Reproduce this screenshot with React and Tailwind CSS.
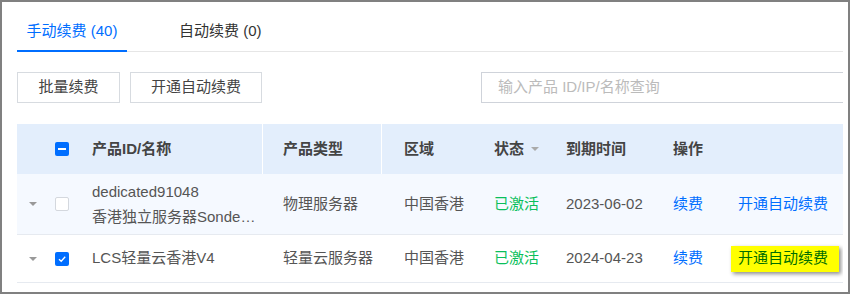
import React from 'react'

const cols = 'grid grid-cols-[30px_25px_191px_119px_92px_72px_107px_65px_125px]'

function Check({ state }) {
  if (state === 'some') {
    return (
      <span className="flex h-[14px] w-[14px] items-center justify-center rounded-[2px] bg-[#006eff]">
        <span className="h-[2px] w-[8px] bg-white" />
      </span>
    )
  }
  if (state === 'on') {
    return (
      <span className="flex h-[14px] w-[14px] items-center justify-center rounded-[2px] bg-[#006eff]">
        <svg width="10" height="10" viewBox="0 0 10 10" fill="none">
          <path d="M2 5.2 4.2 7.3 8.2 2.8" stroke="white" strokeWidth="1.3" />
        </svg>
      </span>
    )
  }
  return <span className="h-[14px] w-[14px] rounded-[2px] border border-[#d4d8de] bg-white" />
}

function Caret() {
  return <span className="h-0 w-0 border-x-4 border-t-4 border-x-transparent border-t-[#999]" />
}

export default function App() {
  return (
    <div className="h-[294px] w-[850px] overflow-hidden border-2 border-[#808080] bg-white font-['Liberation_Sans','Noto_Sans_CJK_SC',sans-serif] text-[15px] text-[#555]">
      <div className="ml-[15px] w-[826px] overflow-hidden">
        {/* tabs */}
        <div className="flex h-[50px] border-b border-[#e6e6e6]">
          <div className="-mb-px flex w-[110px] items-center justify-center border-b-2 border-[#006eff] pt-[10px] text-[#006eff]">手动续费 (40)</div>
          <div className="-mb-px ml-[52px] flex items-center border-b-2 border-transparent pt-[10px] text-[#333]">自动续费 (0)</div>
        </div>

        {/* toolbar */}
        <div className="mt-[20px] flex h-[31px]">
          <button className="w-[103px] shrink-0 border border-[#d7dbe0] bg-white text-[#444]">批量续费</button>
          <button className="ml-[10px] w-[132px] shrink-0 border border-[#d7dbe0] bg-white text-[#444]">开通自动续费</button>
          <div className="ml-[219px] flex w-[400px] shrink-0 items-center border border-[#cfd3da] pl-[16px] text-[#bbb]">输入产品 ID/IP/名称查询</div>
        </div>

        {/* table */}
        <div className="mt-[21px]">
          <div className={`${cols} h-[50px] items-center bg-[#e3eefc] font-bold text-[#444]`}>
            <div />
            <div className="flex pl-[8px]"><Check state="some" /></div>
            <div className="flex h-full items-center border-r border-white pl-[20px]">产品ID/名称</div>
            <div className="flex h-full items-center border-r border-white pl-[20px]">产品类型</div>
            <div className="pl-[22px]">区域</div>
            <div className="flex items-center pl-[20px]">
              状态
              <span className="ml-[7px] h-0 w-0 border-x-[4px] border-t-[4px] border-x-transparent border-t-[#aaa]" />
            </div>
            <div className="pl-[20px]">到期时间</div>
            <div className="pl-[20px]">操作</div>
            <div />
          </div>

          <div className={`${cols} h-[61px] items-center border-b border-[#e6eaf0] bg-[#f5f9ff]`}>
            <div className="flex pl-[12px]"><Caret /></div>
            <div className="flex pl-[8px]"><Check state="off" /></div>
            <div className="pl-[20px] leading-[25px]">
              <div>dedicated91048</div>
              <div className="w-[167px] truncate">香港独立服务器Sondesk-E3</div>
            </div>
            <div className="pl-[20px]">物理服务器</div>
            <div className="pl-[22px]">中国香港</div>
            <div className="pl-[20px] text-[#0abf5b]">已激活</div>
            <div className="pl-[20px]">2023-06-02</div>
            <div className="pl-[20px] text-[#006eff]">续费</div>
            <div className="pl-[20px] text-[#006eff]">开通自动续费</div>
          </div>

          <div className={`${cols} h-[48px] items-center border-b border-[#e6eaf0] bg-white`}>
            <div className="flex pl-[12px]"><Caret /></div>
            <div className="flex pl-[8px]"><Check state="on" /></div>
            <div className="pl-[20px]">LCS轻量云香港V4</div>
            <div className="pl-[20px]">轻量云服务器</div>
            <div className="pl-[22px]">中国香港</div>
            <div className="pl-[20px] text-[#0abf5b]">已激活</div>
            <div className="pl-[20px]">2024-04-23</div>
            <div className="pl-[20px] text-[#006eff]">续费</div>
            <div className="pl-[13px]">
              <span className="flex h-[26px] w-[108px] items-center bg-[#ffff00] pl-[7px] text-[#006e00] shadow-[2px_2px_4px_rgba(0,0,0,0.45)]">开通自动续费</span>
            </div>
          </div>
        </div>
      </div>
    </div>
  )
}
